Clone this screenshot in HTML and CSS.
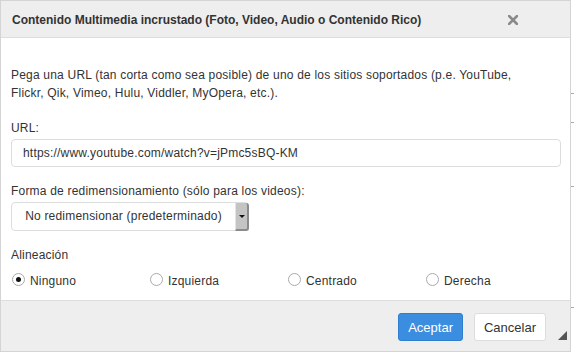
FILE: index.html
```html
<!doctype html>
<html lang="es">
  <head>
    <title>Contenido Multimedia incrustado</title>
    <link rel="stylesheet" href="styles.css">
  </head>
  <body>
    <div class="page">
      <div class="dialog">
        <div class="dlgHead">
          <span class="dlgTitle">Contenido Multimedia incrustado (Foto, Video, Audio o Contenido Rico)</span>
          <svg class="dlgClose" width="10" height="10" viewBox="0 0 10 10">
            <path d="M1 1 L9 9 M9 1 L1 9" stroke="#8a8a8a" stroke-width="2.6" stroke-linecap="square"/>
          </svg>
        </div>

        <div class="dlgBody">
          <p class="intro">Pega una URL (tan corta como sea posible) de uno de los sitios soportados (p.e. YouTube, Flickr, Qik, Vimeo, Hulu, Viddler, MyOpera, etc.).</p>

          <label class="fieldLabel">URL:</label>
          <div class="textBox">https://www.youtube.com/watch?v=jPmc5sBQ-KM</div>

          <label class="fieldLabel">Forma de redimensionamiento (sólo para los videos):</label>
          <div class="selectBox">
            <span class="selectText">No redimensionar (predeterminado)</span>
            <span class="selectArrow"></span>
          </div>

          <label class="fieldLabel">Alineación</label>
          <div class="radioRow">
            <div class="radioItem"><span class="radio checked"></span>Ninguno</div>
            <div class="radioItem"><span class="radio"></span>Izquierda</div>
            <div class="radioItem"><span class="radio"></span>Centrado</div>
            <div class="radioItem"><span class="radio"></span>Derecha</div>
          </div>
        </div>

        <div class="dlgFoot">
          <button class="btn btnPrimary">Aceptar</button>
          <button class="btn">Cancelar</button>
          <span class="grip"></span>
        </div>
      </div>

      <div class="behind">
        <span class="tick t1"></span>
        <span class="tick t2"></span>
        <span class="tick t3"></span>
        <span class="tick t4"></span>
      </div>
    </div>
  </body>
</html>
```

FILE: styles.css
```css
body {
  margin: 0;
  background-color: #fff;
  font-family: "Liberation Sans", Arial, sans-serif;
  font-size: 12px;
  letter-spacing: 0.2px;
  color: #333;
}

.page {
  display: flex;
  align-items: flex-start;
}

.dialog {
  width: 569px;
  border: 1px solid #d4d4d4;
  background-color: #fff;
  display: flex;
  flex-direction: column;
}

.dlgHead {
  height: 36px;
  background-color: #eee;
  border-bottom: 1px solid #ddd;
  display: flex;
  align-items: center;
  justify-content: space-between;
  padding: 0 52px 0 11px;
}

.dlgTitle {
  font-weight: bold;
  letter-spacing: 0;
  color: #333;
  padding-top: 2px;
}

.dlgClose {
  margin-top: 1px;
}

.dlgBody {
  padding: 28px 9px 10px 10px;
  display: flex;
  flex-direction: column;
  height: 224px;
}

.intro {
  margin: 0 0 17px 0;
  line-height: 18px;
  max-width: 515px;
}

.fieldLabel {
  line-height: 18px;
  margin-bottom: 2px;
}

.textBox {
  height: 26px;
  border: 1px solid #ddd;
  border-radius: 4px;
  line-height: 26px;
  padding: 0 11px;
  margin-bottom: 15px;
}

.selectBox {
  width: 236px;
  height: 27px;
  border: 1px solid #ddd;
  border-radius: 4px;
  display: flex;
  align-items: stretch;
  margin-bottom: 15px;
}

.selectText {
  flex: 1;
  line-height: 27px;
  text-align: center;
}

.selectArrow {
  width: 11px;
  background-color: #c4c4c4;
  border-right: 2px solid #8a8a8a;
  border-bottom: 2px solid #8a8a8a;
  border-left: 1px solid #e4e4e4;
  margin: 0 -1px -1px 0;
  border-radius: 0 3px 3px 0;
  display: flex;
  align-items: center;
  justify-content: center;
}

.selectArrow::after {
  content: "";
  border-left: 3px solid transparent;
  border-right: 3px solid transparent;
  border-top: 3px solid #111;
}

.radioRow {
  display: grid;
  grid-template-columns: 138px 138px 138px 138px;
  margin-top: 6px;
}

.radioItem {
  display: flex;
  align-items: center;
  line-height: 18px;
}

.radio {
  width: 11px;
  height: 11px;
  border: 1px solid #aaa;
  border-radius: 50%;
  margin: 0 5px 0 1px;
  position: relative;
  top: -2px;
  display: flex;
  align-items: center;
  justify-content: center;
}

.radio.checked::after {
  content: "";
  width: 5px;
  height: 5px;
  border-radius: 50%;
  background-color: #111;
}

.dlgFoot {
  height: 50px;
  background-color: #eee;
  border-top: 1px solid #ddd;
  display: flex;
  align-items: center;
  justify-content: flex-end;
  padding-right: 24px;
  gap: 11px;
  position: relative;
}

.btn {
  height: 28px;
  padding: 0 9px;
  border: 1px solid #ddd;
  border-radius: 3px;
  background-color: #fff;
  font-family: "Liberation Sans", Arial, sans-serif;
  font-size: 13px;
  color: #333;
  margin-top: 2px;
}

.btnPrimary {
  background-color: #3b8de0;
  border-color: #2f7fd0;
  color: #fff;
}

.grip {
  position: absolute;
  right: 3px;
  bottom: 11px;
  width: 0;
  height: 0;
  border-left: 9px solid transparent;
  border-bottom: 9px solid #555;
}

.behind {
  flex: 1;
  height: 353px;
  position: relative;
}

.tick {
  position: absolute;
  left: 0;
  width: 3px;
  height: 1px;
  background-color: #aaa;
}

.t1 { top: 93px; }
.t2 { top: 122px; }
.t3 { top: 186px; }
.t4 { top: 307px; }
```
